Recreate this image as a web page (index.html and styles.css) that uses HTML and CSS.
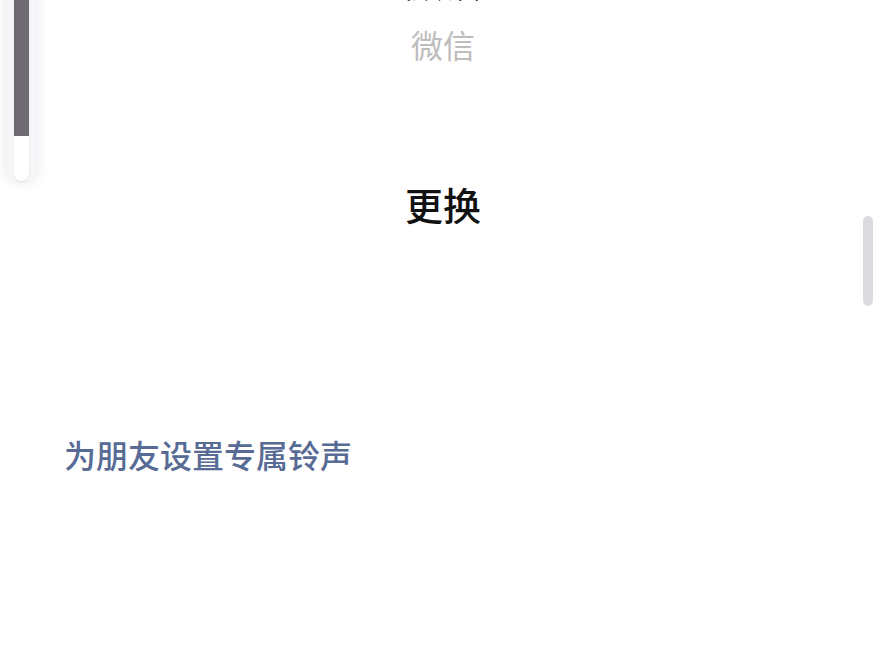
FILE: index.html
```html
<!DOCTYPE html>
<html lang="zh">
<head>
<meta charset="utf-8">
<link rel="stylesheet" href="styles.css">
</head>
<body>
<main class="page">
  <section class="header">
    <div class="name">默认</div>
    <div class="source">微信</div>
    <div class="change">更换</div>
  </section>
  <section class="options">
    <div class="link">为朋友设置专属铃声</div>
  </section>
</main>
<div class="volume">
  <div class="track"><div class="fill"></div></div>
</div>
<div class="scrollbar"></div>
</body>
</html>
```
FILE: styles.css
```css
html, body {
  margin: 0;
  padding: 0;
  background: #ffffff;
  font-family: "Noto Sans CJK SC", "Noto Sans", sans-serif;
}
.page {
  width: 886px;
  height: 666px;
  overflow: hidden;
  display: flex;
  flex-direction: column;
}
.header {
  display: flex;
  flex-direction: column;
  align-items: center;
  margin-top: -38px;
}
.name {
  font-size: 38px;
  line-height: 38px;
  font-weight: 700;
  color: #000;
}
.source {
  font-size: 32px;
  line-height: 32px;
  color: #bdbdbd;
  margin-top: 28px;
}
.change {
  font-size: 38px;
  line-height: 38px;
  font-weight: 500;
  color: #111;
  margin-top: 125px;
}
.options {
  padding-left: 64px;
  margin-top: 215px;
}
.link {
  font-size: 32px;
  line-height: 32px;
  font-weight: 500;
  color: #576b95;
}
.volume {
  position: absolute;
  left: 7px;
  top: -20px;
  width: 29px;
  height: 201px;
  border-radius: 0 0 12px 12px;
  background: rgba(238,238,242,0.55);
  box-shadow: 0 0 10px 3px rgba(225,225,232,0.6);
  display: flex;
  justify-content: center;
}
.track {
  width: 15px;
  height: 201px;
  background: #ffffff;
  border-radius: 0 0 8px 8px;
  overflow: hidden;
  box-shadow: 0 1px 2px rgba(0,0,0,0.08);
}
.fill {
  height: 156px;
  background: #6e6c72;
}
.scrollbar {
  position: absolute;
  left: 863px;
  top: 216px;
  width: 10px;
  height: 90px;
  border-radius: 5px;
  background: #dcdbe0;
}
```
